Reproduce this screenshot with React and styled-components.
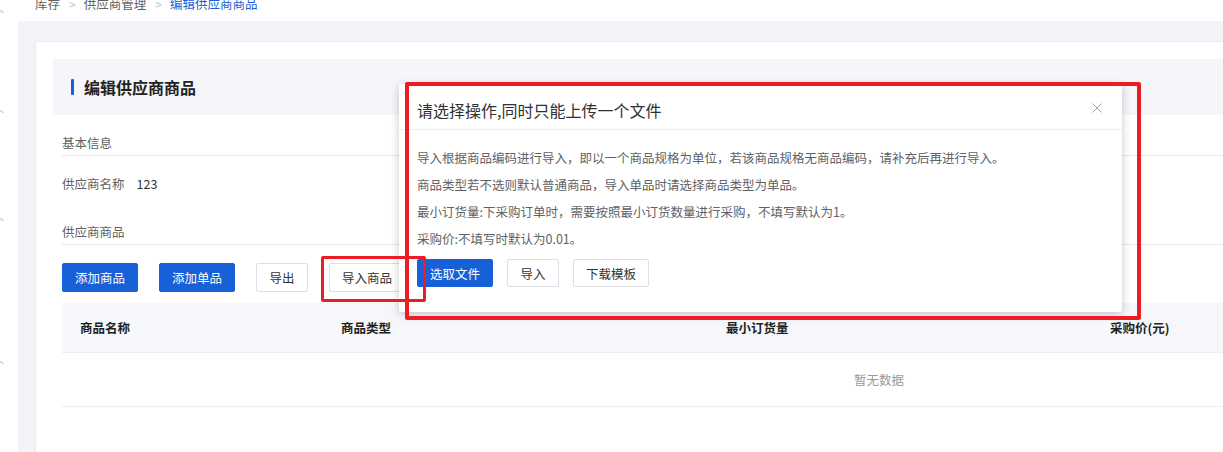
import React from "react";
import styled, { createGlobalStyle } from "styled-components";

const GlobalStyle = createGlobalStyle`
  html, body { margin: 0; padding: 0; overflow: hidden; background: #fff; }
  body {
    font-family: "Noto Sans CJK SC", "Noto Sans", "Liberation Sans", sans-serif;
    font-size: 12.5px;
    color: #303133;
  }
  * { box-sizing: border-box; }
`;

const Page = styled.div`
  position: relative;
  display: flex;
  width: 1740px;
  height: 452px;
`;

const Rail = styled.div`
  width: 18px;
  flex: none;
  background: #fff;
  display: flex;
  flex-direction: column;
`;

const RailMark = styled.div`
  margin-top: ${(p) => p.$gap}px;
  height: 6px;
  width: 6px;
  display: flex;
  align-items: center;
  margin-left: -2px;
`;

const Main = styled.div`
  flex: 1;
  display: flex;
  flex-direction: column;
`;

const Breadcrumb = styled.div`
  height: 21px;
  padding-left: 17px;
  display: flex;
  align-items: flex-start;
  line-height: 7px;
  font-size: 12.5px;
  color: #606266;
  background: #fff;
`;

const Crumb = styled.span`
  color: ${(p) => (p.$active ? "#1a5fd6" : "#606266")};
`;

const Sep = styled.span`
  color: #c0c4cc;
  margin: 0 8px 0 9px;
  font-size: 12px;
`;

const Content = styled.div`
  flex: 1;
  background: #f3f4f8;
  padding: 20px 17px 0 17px;
`;

const Card = styled.div`
  background: #fff;
  border-top: 1px solid #e8ebf2;
  border-left: 1px solid #e8ebf2;
  padding: 17px 18px 0 17px;
  height: 100%;
`;

const TitleBox = styled.div`
  height: 56px;
  background: #f5f6f9;
  display: flex;
  align-items: center;
  padding-left: 18px;
  gap: 10px;
`;

const TitleBar = styled.span`
  width: 3px;
  height: 16px;
  background: #1a5fd6;
  border-radius: 1px;
`;

const Title = styled.h1`
  margin: 0;
  font-size: 16px;
  font-weight: 700;
  color: #222;
  line-height: 20px;
`;

const Section = styled.div`
  padding: 0 9px;
`;

const SectionTitle = styled.div`
  margin-top: ${(p) => p.$top}px;
  height: 25px;
  line-height: 24px;
  color: #606266;
  border-bottom: 1px solid #e4e7ed;
`;

const FieldRow = styled.div`
  padding: 17px 0 0 0;
  height: 64px;
  line-height: 22px;
  display: flex;
  gap: 12px;
  color: #606266;
`;

const FieldValue = styled.span`
  color: #333;
`;

const Toolbar = styled.div`
  margin-top: ${(p) => p.$top}px;
  display: flex;
  gap: ${(p) => p.$gap}px;
`;

const Button = styled.button`
  flex: none;
  height: ${(p) => (p.$h ? p.$h : 29)}px;
  width: ${(p) => p.$w}px;
  padding: 0;
  font-family: inherit;
  font-size: 12.5px;
  border-radius: 2px;
  cursor: pointer;
  border: 1px solid ${(p) => (p.$primary ? "#1860d8" : "#dcdfe6")};
  background: ${(p) => (p.$primary ? "#1860d8" : "#fff")};
  color: ${(p) => (p.$primary ? "#fff" : "#333")};
`;

const Table = styled.div`
  margin-top: 11px;
`;

const HeadRow = styled.div`
  display: grid;
  grid-template-columns: 261px 385px 384px 1fr;
  height: 50px;
  background: #f5f7fa;
  border-bottom: 1px solid #ebeef5;
  align-items: center;
`;

const HeadCell = styled.div`
  padding-left: 18px;
  font-weight: 700;
  color: #1f1f1f;
`;

const EmptyRow = styled.div`
  height: 54px;
  display: flex;
  align-items: center;
  justify-content: center;
  color: #999;
  border-bottom: 1px solid #ebeef5;
`;

const Modal = styled.div`
  position: absolute;
  left: 399px;
  top: 84px;
  width: 723px;
  height: 228px;
  background: #fff;
  border-radius: 2px;
  box-shadow: 0 2px 10px rgba(0, 0, 0, 0.22);
  display: flex;
  flex-direction: column;
`;

const ModalHeader = styled.div`
  height: 46px;
  padding: 16px 18px 0 18px;
  border-bottom: 1px solid #ebeef5;
  display: flex;
  justify-content: space-between;
  align-items: flex-start;
`;

const ModalTitle = styled.div`
  font-size: 16px;
  line-height: 20px;
  color: #303133;
`;

const Close = styled.span`
  width: 10px;
  height: 10px;
  margin: 3px 2px 0 0;
  display: flex;
`;

const ModalBody = styled.div`
  padding: 14px 18px 0 18px;
`;

const Line = styled.p`
  margin: 0;
  line-height: 27px;
  color: #606266;
`;

const Annotation = styled.div`
  position: absolute;
  left: ${(p) => p.$x}px;
  top: ${(p) => p.$y}px;
  width: ${(p) => p.$w}px;
  height: ${(p) => p.$h}px;
  border: ${(p) => p.$t}px solid #ec1c24;
  border-radius: 2px;
  pointer-events: none;
`;

const Chevron = () => (
  <svg width="6" height="6" viewBox="0 0 6 6">
    <path d="M0.5 4 L3 1.5 L5.5 4" fill="none" stroke="#b0b3b8" strokeWidth="1" />
  </svg>
);

export default function App() {
  return (
    <>
      <GlobalStyle />
      <Page>
        <Rail>
          <RailMark $gap={9}><Chevron /></RailMark>
          <RailMark $gap={94}><Chevron /></RailMark>
          <RailMark $gap={102}><Chevron /></RailMark>
          <RailMark $gap={137}><Chevron /></RailMark>
        </Rail>
        <Main>
          <Breadcrumb>
            <Crumb>库存</Crumb>
            <Sep>&gt;</Sep>
            <Crumb>供应商管理</Crumb>
            <Sep>&gt;</Sep>
            <Crumb $active>编辑供应商商品</Crumb>
          </Breadcrumb>
          <Content>
            <Card>
              <TitleBox>
                <TitleBar />
                <Title>编辑供应商商品</Title>
              </TitleBox>
              <Section>
                <SectionTitle $top={16}>基本信息</SectionTitle>
                <FieldRow>
                  <span>供应商名称</span>
                  <FieldValue>123</FieldValue>
                </FieldRow>
                <SectionTitle $top={0}>供应商商品</SectionTitle>
                <Toolbar $gap={21} $top={18}>
                  <Button $primary $w={76}>添加商品</Button>
                  <Button $primary $w={76}>添加单品</Button>
                  <Button $w={52}>导出</Button>
                  <Button $w={76}>导入商品</Button>
                </Toolbar>
                <Table>
                  <HeadRow>
                    <HeadCell>商品名称</HeadCell>
                    <HeadCell>商品类型</HeadCell>
                    <HeadCell>最小订货量</HeadCell>
                    <HeadCell>采购价(元)</HeadCell>
                  </HeadRow>
                  <EmptyRow>暂无数据</EmptyRow>
                </Table>
              </Section>
            </Card>
          </Content>
        </Main>

        <Modal>
          <ModalHeader>
            <ModalTitle>请选择操作,同时只能上传一个文件</ModalTitle>
            <Close>
              <svg width="10" height="10" viewBox="0 0 10 10">
                <path d="M0.5 0.5 L9.5 9.5 M9.5 0.5 L0.5 9.5" stroke="#a0a3a8" strokeWidth="1" fill="none" />
              </svg>
            </Close>
          </ModalHeader>
          <ModalBody>
            <Line>导入根据商品编码进行导入，即以一个商品规格为单位，若该商品规格无商品编码，请补充后再进行导入。</Line>
            <Line>商品类型若不选则默认普通商品，导入单品时请选择商品类型为单品。</Line>
            <Line>最小订货量:下采购订单时，需要按照最小订货数量进行采购，不填写默认为1。</Line>
            <Line>采购价:不填写时默认为0.01。</Line>
            <Toolbar $gap={14} $top={7}>
              <Button $primary $h={28} $w={76}>选取文件</Button>
              <Button $h={28} $w={52}>导入</Button>
              <Button $h={28} $w={76}>下载模板</Button>
            </Toolbar>
          </ModalBody>
        </Modal>

        <Annotation $x={405} $y={82} $w={736} $h={238} $t={4} />
        <Annotation $x={321} $y={256} $w={105} $h={46} $t={3} />
      </Page>
    </>
  );
}
